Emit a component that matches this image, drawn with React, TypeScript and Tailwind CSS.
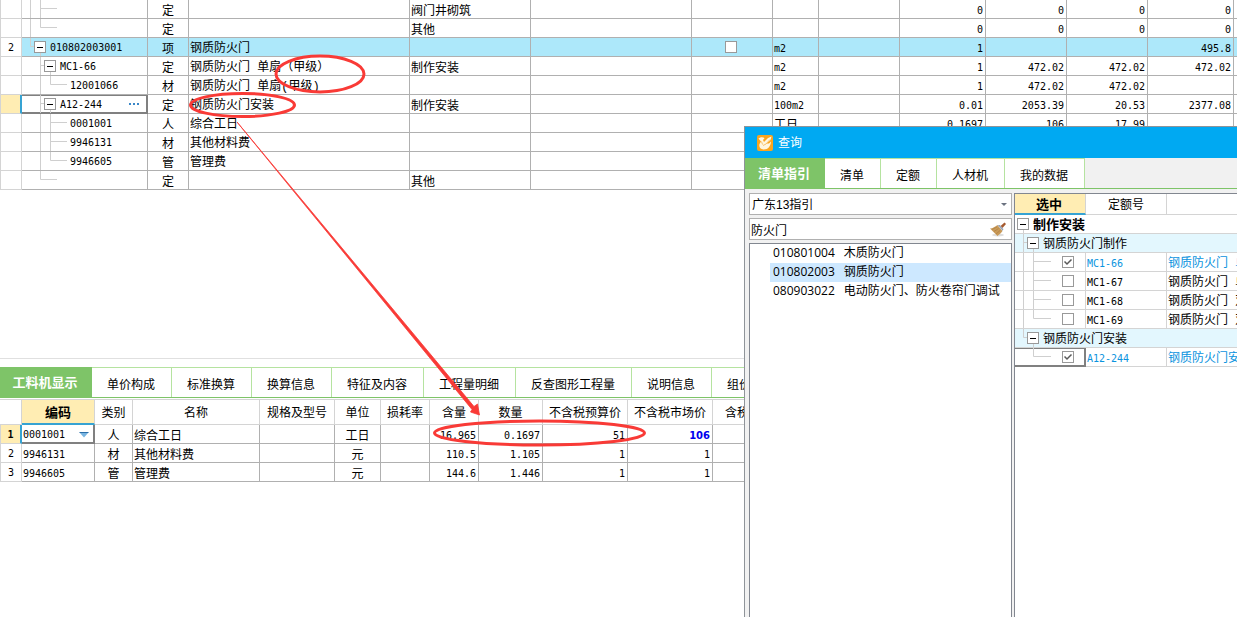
import { Fragment, ReactNode } from "react";

type BillRow = {
    no?: string;
    lines: string;
    indent: string;
    open?: boolean;
    code?: string;
    kind: string;
    name?: string;
    feature?: string;
    unit?: string;
    nums: string[];
    current?: boolean;
    main?: boolean;
};

const billRows: BillRow[] = [
    { lines: "M8.5 0V18M18.5 0V18M18.5 8.5H35", indent: "w-[48px]", kind: "定", feature: "阀门井砌筑", nums: ["0", "0", "0", "0"] },
    { lines: "M8.5 0V18M18.5 0V8.5H35", indent: "w-[48px]", kind: "定", feature: "其他", nums: ["0", "0", "0", "0"] },
    { no: "2", lines: "M8.5 0V8.5H12", indent: "w-[12px]", open: true, code: "010802003001", kind: "项", name: "钢质防火门", unit: "m2", nums: ["1", "", "", "495.8"], main: true },
    { lines: "M18.5 0V18M18.5 8.5H22", indent: "w-[22px]", open: true, code: "MC1-66", kind: "定", name: "钢质防火门 单扇（甲级）", feature: "制作安装", unit: "m2", nums: ["1", "472.02", "472.02", "472.02"] },
    { lines: "M18.5 0V18M28.5 0V8.5H45", indent: "w-[48px]", code: "12001066", kind: "材", name: "钢质防火门 单扇(甲级)", unit: "m2", nums: ["1", "472.02", "472.02", ""] },
    { lines: "M18.5 0V18M18.5 8.5H22", indent: "w-[22px]", open: true, code: "A12-244", kind: "定", name: "钢质防火门安装", feature: "制作安装", unit: "100m2", nums: ["0.01", "2053.39", "20.53", "2377.08"], current: true },
    { lines: "M18.5 0V18M28.5 0V18M28.5 8.5H45", indent: "w-[48px]", code: "0001001", kind: "人", name: "综合工日", unit: "工日", nums: ["0.1697", "106", "17.99", ""] },
    { lines: "M18.5 0V18M28.5 0V18M28.5 8.5H45", indent: "w-[48px]", code: "9946131", kind: "材", name: "其他材料费", nums: ["", "", "", ""] },
    { lines: "M18.5 0V18M28.5 0V8.5H45", indent: "w-[48px]", code: "9946605", kind: "管", name: "管理费", nums: ["", "", "", ""] },
    { lines: "M18.5 0V8.5H35", indent: "w-[48px]", kind: "定", feature: "其他", nums: ["", "", "", ""] },
];

const detailTabs = ["工料机显示", "单价构成", "标准换算", "换算信息", "特征及内容", "工程量明细", "反查图形工程量", "说明信息", "组价方案"];

const detailHeads = ["编码", "类别", "名称", "规格及型号", "单位", "损耗率", "含量", "数量", "不含税预算价", "不含税市场价", "含税预算价"];

const detailRows = [
    { code: "0001001", kind: "人", name: "综合工日", unit: "工日", nums: ["16.965", "0.1697", "51", "106"] },
    { code: "9946131", kind: "材", name: "其他材料费", unit: "元", nums: ["110.5", "1.105", "1", "1"] },
    { code: "9946605", kind: "管", name: "管理费", unit: "元", nums: ["144.6", "1.446", "1", "1"] },
];

const guideItems = [
    { code: "010801004", name: "木质防火门" },
    { code: "010802003", name: "钢质防火门", active: true },
    { code: "080903022", name: "电动防火门、防火卷帘门调试" },
];

const quotaGroups = [
    {
        title: "钢质防火门制作",
        lines: "M8.5 0V18M8.5 8.5H12",
        items: [
            { code: "MC1-66", name: "钢质防火门 单", checked: true, lines: "M8.5 0V18M18.5 0V18M18.5 8.5H36" },
            { code: "MC1-67", name: "钢质防火门 单", lines: "M8.5 0V18M18.5 0V18M18.5 8.5H36" },
            { code: "MC1-68", name: "钢质防火门 双", lines: "M8.5 0V18M18.5 0V18M18.5 8.5H36" },
            { code: "MC1-69", name: "钢质防火门 双", lines: "M8.5 0V18M18.5 0V8.5H36" },
        ],
    },
    {
        title: "钢质防火门安装",
        lines: "M8.5 0V8.5H12",
        items: [{ code: "A12-244", name: "钢质防火门安装", checked: true, current: true, lines: "M18.5 0V8.5H36" }],
    },
];

const mono = "font-['DejaVu_Sans_Mono',monospace] text-[10px]";
const nameFont = "font-['Liberation_Mono','Noto_Sans_CJK_SC',monospace]";
const currentCell = "border-[#808080] shadow-[inset_0_1px_#808080,inset_0_-1px_#808080,inset_-1px_0_#808080]";

const TreeLines = ({ d, width }: { d: string; width: string }) => (
    <svg className={`h-[18px] shrink-0 ${width}`} fill="none" stroke="#cfcfcf" aria-hidden="true">
        <path d={d} />
    </svg>
);

const Expander = ({ label }: { label: string }) => (
    <button
        aria-label={label}
        className="relative flex size-3 shrink-0 items-center justify-center border border-[#999] bg-white after:absolute after:top-full after:left-1/2 after:mt-px after:h-[3px] after:w-px after:bg-[#cfcfcf]"
    >
        <span className="h-px w-1.5 bg-black"></span>
    </button>
);

const Check = ({ label, checked }: { label: string; checked?: boolean }) => (
    <span className="grid size-3 shrink-0">
        <input
            type="checkbox"
            aria-label={label}
            defaultChecked={checked}
            className="peer size-3 appearance-none border border-[#999] bg-white [grid-area:1/1]"
        />
        <svg viewBox="0 0 12 12" className="pointer-events-none hidden size-3 [grid-area:1/1] peer-checked:block" fill="none" stroke="#5a5a5a" strokeWidth="1.5">
            <path d="M2.5 5.5L5 8L9.5 3.5" />
        </svg>
    </span>
);

const Tabs = ({ items, activeWidth }: { items: string[]; activeWidth: string }) => (
    <div role="tablist" className="flex h-[31px] shrink-0 overflow-hidden border-b border-[#7ec468] whitespace-nowrap">
        {items.map((item, i) =>
            i === 0 ? (
                <button key={item} role="tab" aria-selected="true" className={`shrink-0 bg-[#7ec468] pt-0.5 pr-0.5 text-[13px] font-bold text-white ${activeWidth}`}>
                    {item}
                </button>
            ) : (
                <button key={item} role="tab" aria-selected="false" className="shrink-0 border-t border-r border-[#b5e3a0] bg-white pt-1 pr-4 pl-[15px]">
                    {item}
                </button>
            )
        )}
    </div>
);

const Cell = ({ children, className = "border-[#b0b0b0]" }: { children?: ReactNode; className?: string }) => (
    <td className={`h-[19px] overflow-hidden border-r border-b p-0 leading-[14px] whitespace-nowrap ${className}`}>{children}</td>
);

const textCell = "border-[#b0b0b0] pt-1 pl-px";
const kindCell = "border-[#b0b0b0] pt-1 text-center";
const numCell = `border-[#b0b0b0] pt-[3px] pr-0.5 text-right ${mono}`;

const BillTable = () => (
    <table className="w-full table-fixed border-separate border-spacing-0">
        <colgroup>
            <col className="w-[22px]" />
            <col className="w-[126px]" />
            <col className="w-[41px]" />
            <col className="w-[221px]" />
            <col className="w-[121px]" />
            <col className="w-[161px]" />
            <col className="w-[81px]" />
            <col className="w-[46px]" />
            <col className="w-[81px]" />
            <col className="w-[86px]" />
            <col className="w-[81px]" />
            <col className="w-[81px]" />
            <col className="w-[86px]" />
            <col />
        </colgroup>
        <tbody>
            {billRows.map((row, i) => (
                <tr key={i} className={row.main ? "bg-[#ade8fa]" : "bg-white"}>
                    <td
                        className={`h-[19px] border-b border-l border-[#d4d4d4] p-0 pt-0.5 text-center leading-4 ${mono} ${
                            row.current ? "border-r-2 border-r-[#36a3d3] bg-[#ffedb3]" : "border-r bg-white"
                        }`}
                    >
                        {row.no}
                    </td>
                    <Cell className={row.current ? currentCell : "border-[#b0b0b0]"}>
                        <div className="flex h-[18px] items-center">
                            <TreeLines d={row.lines} width={row.indent} />
                            {row.open && <Expander label={`折叠 ${row.code}`} />}
                            <span className={`pt-0.5 ${mono} ${row.open ? "ml-1" : ""}`}>{row.code}</span>
                            {row.current && (
                                <button aria-label="更多" className="mr-2 ml-auto flex gap-0.5">
                                    <span className="size-0.5 bg-[#3a87c8]"></span>
                                    <span className="size-0.5 bg-[#3a87c8]"></span>
                                    <span className="size-0.5 bg-[#3a87c8]"></span>
                                </button>
                            )}
                        </div>
                    </Cell>
                    <Cell className={kindCell}>{row.kind}</Cell>
                    <Cell className={`${textCell} ${nameFont}`}>{row.name}</Cell>
                    <Cell className={textCell}>{row.feature}</Cell>
                    <Cell />
                    <Cell>{row.main && <div className="flex justify-center pr-0.5"><Check label="主要清单" /></div>}</Cell>
                    <Cell className={row.unit === "工日" ? textCell : `border-[#b0b0b0] pt-[3px] pl-px ${mono}`}>{row.unit}</Cell>
                    <Cell />
                    {row.nums.map((n, k) => (
                        <Cell key={k} className={numCell}>{n}</Cell>
                    ))}
                    <td className="border-b border-[#b0b0b0] p-0"></td>
                </tr>
            ))}
        </tbody>
    </table>
);

const DetailTable = () => (
    <table className="w-[798px] table-fixed border-separate border-spacing-0 border-t border-[#d4d4d4]">
        <colgroup>
            <col className="w-[22px]" />
            <col className="w-[73px]" />
            <col className="w-[38px]" />
            <col className="w-[127px]" />
            <col className="w-[75px]" />
            <col className="w-[46px]" />
            <col className="w-[49px]" />
            <col className="w-[49px]" />
            <col className="w-[64px]" />
            <col className="w-[85px]" />
            <col className="w-[85px]" />
            <col className="w-[85px]" />
        </colgroup>
        <thead>
            <tr>
                <td className="h-[25px] border-r border-b border-[#d4d4d4] p-0"></td>
                {detailHeads.map((head, i) => (
                    <th
                        key={head}
                        className={`h-[25px] border-r p-0 pt-0.5 whitespace-nowrap ${
                            i === 0 ? "border-b-2 border-r-[#d4d4d4] border-b-[#36a3d3] bg-[#ffedb3] text-[13px] font-bold" : "border-b border-[#d4d4d4] font-normal"
                        }`}
                    >
                        {head}
                    </th>
                ))}
            </tr>
        </thead>
        <tbody>
            {detailRows.map((row, i) => (
                <tr key={row.code}>
                    <td
                        className={`border-b border-l border-[#d4d4d4] p-0 pt-0.5 text-center leading-4 ${mono} ${
                            i === 0 ? "border-r-2 border-r-[#36a3d3] bg-[#ffedb3] font-bold" : "border-r"
                        }`}
                    >
                        {i + 1}
                    </td>
                    <Cell className={`${mono} ${i === 0 ? "border-r-2 border-b-2 border-[#808080] pt-0.5" : "border-[#b0b0b0] pt-[3px]"}`}>
                        <div className="flex items-center justify-between pr-1 pl-px">
                            {row.code}
                            {i === 0 && (
                                <button aria-label="选择编码">
                                    <svg viewBox="0 0 10 6" className="h-1.5 w-2.5">
                                        <path d="M0.5 0.5H9.5L5 5.5Z" fill="#78b4e0" />
                                        <path d="M0.5 0.5H9.5" stroke="#2b6ea8" />
                                    </svg>
                                </button>
                            )}
                        </div>
                    </Cell>
                    <Cell className={kindCell}>{row.kind}</Cell>
                    <Cell className={textCell}>{row.name}</Cell>
                    <Cell />
                    <Cell className={kindCell}>{row.unit}</Cell>
                    <Cell />
                    {row.nums.map((n, k) => (
                        <Cell
                            key={k}
                            className={
                                i === 0 && k === 3
                                    ? "border-[#b0b0b0] pt-[3px] pr-0.5 text-right font-['DejaVu_Sans',sans-serif] text-[10px] font-bold text-[#0000ee]"
                                    : numCell
                            }
                        >
                            {n}
                        </Cell>
                    ))}
                    <Cell />
                </tr>
            ))}
        </tbody>
    </table>
);

const AppIcon = () => (
    <svg viewBox="0 0 16 16" className="size-4" aria-hidden="true">
        <rect width="16" height="16" rx="2" fill="#faa51e" />
        <path d="M1.5 3.5C4 1.5 6.5 2 7.5 3.2L6 5L7 7L11 3L14.5 1.500L13.500 5L9.500 8.500L12 8.500L14 6.500C13.500 11 11.500 14.500 6.500 14.500C3 14.200 1.800 12 2.500 9L4 6.500Z" fill="#fff6e0" />
        <path d="M6 10.500L9 9L13 4.500M4.500 6.500L5.500 9.500" fill="none" stroke="#f5b550" strokeWidth="0.8" />
    </svg>
);

const BroomIcon = () => (
    <svg viewBox="0 0 18 15" className="h-[15px] w-[18px]" aria-hidden="true">
        <ellipse cx="9" cy="13" rx="6" ry="1.500" fill="#ddd" />
        <path d="M11 4.500L15.500 0.500L17 2L13.500 6Z" fill="#a65a2e" />
        <path d="M1 6.500C4 6.500 6 4.500 8.500 3L13.500 9C12 11 10.500 12.500 8.500 14Z" fill="#c99a58" />
        <path d="M3 7.500L8 5M5 9.500L9.500 6.500M7 12L11 8.500" stroke="#a87840" strokeWidth="0.6" />
        <path d="M8.500 3L11 3L14.500 7L13.500 9Z" fill="#b4bccb" />
        <path d="M9.800 3L14 8" stroke="#7b8496" strokeWidth="0.600" />
    </svg>
);

const QuotaTable = () => (
    <table className="w-full table-fixed border-separate border-spacing-0">
        <colgroup>
            <col className="w-[71px]" />
            <col className="w-[81px]" />
            <col />
        </colgroup>
        <thead>
            <tr>
                <th className="h-[21px] border-r border-b-2 border-r-[#d4d4d4] border-b-[#36a3d3] bg-[#ffedb3] p-0 pt-0.5 pr-0.5 text-[13px] leading-4 font-bold">选中</th>
                <th className="h-[21px] border-r border-b border-[#d4d4d4] p-0 pt-0.5 leading-4 font-normal">定额号</th>
                <th className="h-[21px] border-b border-[#d4d4d4] p-0"></th>
            </tr>
        </thead>
        <tbody>
            <tr>
                <td colSpan={3} className="h-[19px] border-b border-[#d4d4d4] p-0">
                    <div className="flex h-[18px] items-center pl-0.5 text-[13px] font-bold">
                        <Expander label="折叠 制作安装" />
                        <span className="ml-1 pt-0.5 leading-4">制作安装</span>
                    </div>
                </td>
            </tr>
            {quotaGroups.map((group) => (
                <Fragment key={group.title}>
                    <tr>
                        <td colSpan={3} className="h-[19px] border-b border-[#d4d4d4] bg-[#e3f7fe] p-0">
                            <div className="flex h-[18px] items-center">
                                <TreeLines d={group.lines} width="w-[12px]" />
                                <Expander label={`折叠 ${group.title}`} />
                                <span className="ml-1 pt-0.5 leading-4">{group.title}</span>
                            </div>
                        </td>
                    </tr>
                    {group.items.map((item) => (
                        <tr key={item.code} className={item.checked ? "text-[#0a93de]" : ""}>
                            <td className={`h-[19px] border-r border-b p-0 ${item.current ? currentCell : "border-[#d4d4d4]"}`}>
                                <div className="flex h-[18px] items-center">
                                    <TreeLines d={item.lines} width="w-[47px]" />
                                    <Check label={item.code} checked={item.checked} />
                                </div>
                            </td>
                            <td className={`h-[19px] border-r border-b border-[#d4d4d4] p-0 pt-[3px] pl-px leading-[14px] ${mono}`}>{item.code}</td>
                            <td className={`h-[19px] overflow-hidden border-b border-[#d4d4d4] p-0 pt-[3px] pl-px leading-[14px] whitespace-nowrap ${nameFont}`}>
                                {item.name}
                            </td>
                        </tr>
                    ))}
                </Fragment>
            ))}
        </tbody>
    </table>
);

const QueryDialog = () => (
    <div
        role="dialog"
        aria-label="查询"
        className="absolute top-[126px] right-0 bottom-0 left-[744px] flex flex-col overflow-hidden border-t border-l border-[#8f9499] bg-[#f1f1f1]"
    >
        <div className="flex h-[31px] shrink-0 items-center gap-[5px] bg-[#00a9f2] pl-3 text-white">
            <AppIcon />
            <h2>查询</h2>
        </div>
        <Tabs items={["清单指引", "清单", "定额", "人材机", "我的数据"]} activeWidth="w-20" />
        <div className="flex min-h-0 flex-1 gap-[2px] pt-1 pl-1">
            <div className="flex w-[263px] shrink-0 flex-col gap-[3px]">
                <div className="grid h-[22px] items-center border border-[#b0b0b0] bg-white">
                    <select aria-label="指引" className="h-5 w-full appearance-none pt-px pl-0.5 [grid-area:1/1]">
                        <option>广东13指引</option>
                    </select>
                    <span className="pointer-events-none mr-1 h-0 w-0 justify-self-end border-x-3 border-t-3 border-x-transparent border-t-[#6b7280] [grid-area:1/1]"></span>
                </div>
                <div className="flex h-[22px] items-center border border-[#b0b0b0] bg-white pr-1">
                    <input aria-label="搜索" defaultValue="防火门" className="h-5 min-w-0 flex-1 pl-px" />
                    <button aria-label="清除">
                        <BroomIcon />
                    </button>
                </div>
                <ul className="flex-1 border-t border-r border-l border-[#828790] bg-white font-['Open_Sans','Noto_Sans_CJK_SC',sans-serif]">
                    {guideItems.map((item) => (
                        <li key={item.code} className={`ml-5 flex h-[19px] items-center gap-[9px] pb-0.5 pl-[3px] whitespace-nowrap ${item.active ? "bg-[#cde8ff]" : ""}`}>
                            <span>{item.code}</span>
                            <span>{item.name}</span>
                        </li>
                    ))}
                </ul>
            </div>
            <div className="min-w-0 flex-1 overflow-hidden border-t border-l border-[#828790] bg-white">
                <QuotaTable />
            </div>
        </div>
    </div>
);

const Markup = () => (
    <svg className="pointer-events-none absolute top-0 left-0 h-[450px] w-[700px]" fill="none" stroke="#f93a36" strokeWidth="3" aria-hidden="true">
        <ellipse cx="320" cy="74" rx="44" ry="18" />
        <ellipse cx="242.500" cy="105" rx="52" ry="11.500" />
        <ellipse cx="539.500" cy="433" rx="105" ry="12" />
        <path d="M237 122L474 406.500L477.500 404L479.500 415L470.500 412L472 409.500Z" fill="#f93a36" stroke="#f93a36" strokeWidth="0.8" />
    </svg>
);

const App = () => {
    return (
        <main className="relative flex min-h-screen flex-col overflow-hidden bg-white font-['Liberation_Sans','Noto_Sans_CJK_SC',sans-serif] text-xs text-black">
            <section className="min-h-[358px]">
                <BillTable />
            </section>
            <section className="border-t border-[#e0e0e0] pt-2">
                <Tabs items={detailTabs} activeWidth="w-[92px]" />
                <div className="mt-px overflow-hidden">
                    <DetailTable />
                </div>
            </section>
            <QueryDialog />
            <Markup />
        </main>
    );
};

export default App;
